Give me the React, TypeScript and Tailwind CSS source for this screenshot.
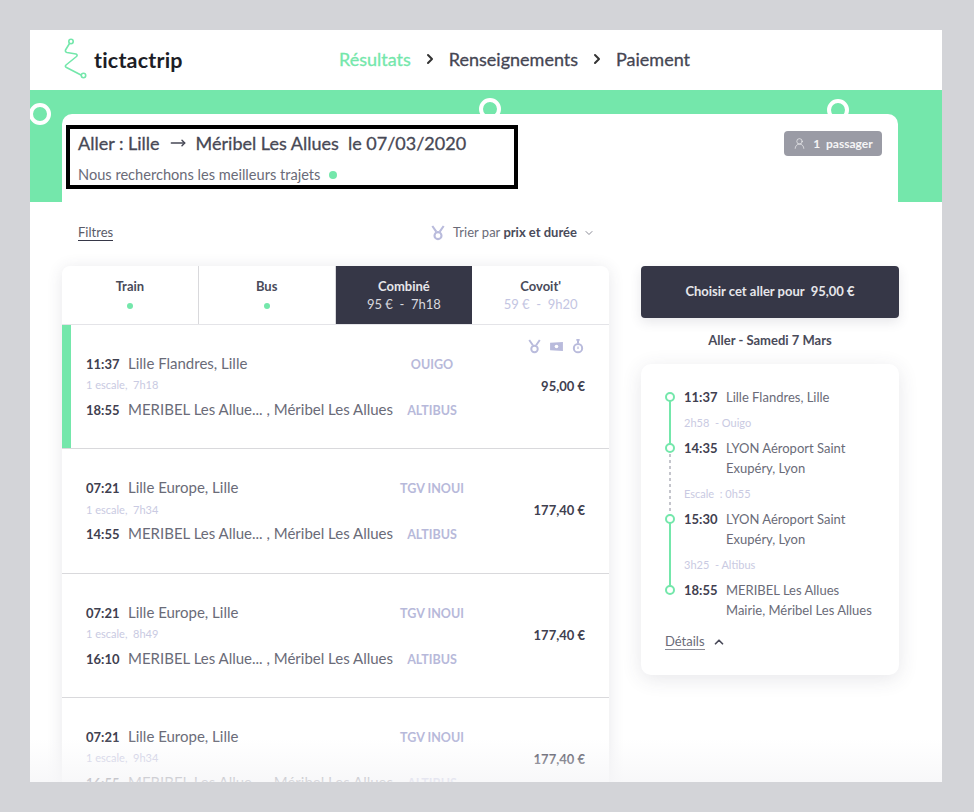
import { ChevronDown, ChevronRight, ChevronUp, MoveRight, UserRound } from 'lucide-react';

const trips = [
  { from: '11:37', fromName: 'Lille Flandres, Lille', op1: 'OUIGO', info: '1 escale,  7h18', to: '18:55', op2: 'ALTIBUS', price: '95,00 €', active: true },
  { from: '07:21', fromName: 'Lille Europe, Lille', op1: 'TGV INOUI', info: '1 escale,  7h34', to: '14:55', op2: 'ALTIBUS', price: '177,40 €', active: false },
  { from: '07:21', fromName: 'Lille Europe, Lille', op1: 'TGV INOUI', info: '1 escale,  8h49', to: '16:10', op2: 'ALTIBUS', price: '177,40 €', active: false },
  { from: '07:21', fromName: 'Lille Europe, Lille', op1: 'TGV INOUI', info: '1 escale,  9h34', to: '16:55', op2: 'ALTIBUS', price: '177,40 €', active: false },
];

function Ring({ className }: { className: string }) {
  return <div className={`absolute w-[22px] h-[22px] rounded-full border-[4px] border-white bg-[#74e7ab] ${className}`} />;
}

function Medal({ className }: { className?: string }) {
  return (
    <svg viewBox="0 0 16 18" className={className} fill="none" stroke="currentColor" strokeWidth="2.4">
      <path d="M1.5 1l4.5 6.5M14.5 1L10 7.5" />
      <circle cx="8" cy="12" r="4" />
    </svg>
  );
}

function Money() {
  return (
    <svg viewBox="0 0 16 12" className="w-[15px] h-[11px] text-[#b9bbdc]" fill="currentColor">
      <path d="M1 2l14-1v10L1 10z" />
      <circle cx="8" cy="6" r="2" fill="#fff" />
    </svg>
  );
}

function Stopwatch() {
  return (
    <svg viewBox="0 0 14 18" className="w-[12px] h-[15px] text-[#b9bbdc]" fill="none" stroke="currentColor" strokeWidth="2.4">
      <path d="M5 1h4M7 1v4" />
      <circle cx="7" cy="11" r="5" />
      <path d="M7 9v3" strokeWidth="1.5" />
    </svg>
  );
}

function TripRow({ trip }: { trip: (typeof trips)[number] }) {
  return (
    <div className="relative h-[124.4px] shrink-0 border-b border-[#d9d9dc] flex">
      {trip.active && <div className="w-[9px] bg-[#74e7ab]" />}
      <div className={`flex-1 flex pr-6 ${trip.active ? 'pl-[15px]' : 'pl-6'}`}>
        <div className="w-[392px] shrink-0 pt-[27px]">
          <div className="flex items-baseline h-5 text-[15px] text-[#6a6b78]">
            <span className="w-[42px] shrink-0 font-bold text-[13px] text-[#3f404f]">{trip.from}</span>
            <span className="w-[258px] shrink-0">{trip.fromName}</span>
            <span className="w-[92px] shrink-0 text-center text-[12.5px] font-bold text-[#b7b9da] whitespace-nowrap">{trip.op1}</span>
          </div>
          <div className="h-[11px] mt-[8px] flex items-center text-[11px] text-[#c9cae2] whitespace-pre">{trip.info}</div>
          <div className="flex items-baseline h-5 mt-[7px] text-[15px] text-[#6a6b78]">
            <span className="w-[42px] shrink-0 font-bold text-[13px] text-[#3f404f]">{trip.to}</span>
            <span className="w-[258px] shrink-0 whitespace-pre">MERIBEL Les Allue... , Méribel Les Allues</span>
            <span className="w-[92px] shrink-0 text-center text-[12.5px] font-bold text-[#b7b9da]">{trip.op2}</span>
          </div>
        </div>
        <div className="flex-1 flex flex-col items-end relative">
          {trip.active && (
            <div className="absolute top-[14px] right-[1px] flex items-center gap-[8px]">
              <Medal className="w-[13px] h-[15px] text-[#b9bbdc]" />
              <Money />
              <Stopwatch />
            </div>
          )}
          <div className="mt-[52px] text-[13px] font-bold text-[#3f404f] whitespace-nowrap">{trip.price}</div>
        </div>
      </div>
    </div>
  );
}

function Tab({ title, sub, dark, line }: { title: string; sub?: string; dark?: boolean; line?: boolean }) {
  return (
    <div className={`flex flex-col items-center pt-[12px] ${dark ? 'bg-[#363747]' : ''} ${line ? 'border-r border-[#d9d9dc]' : ''}`}>
      <div className={`text-[13px] font-bold leading-[16px] ${dark ? 'text-[#e6e6ea]' : 'text-[#4a4b5a]'}`}>{title}</div>
      {sub ? (
        <div className={`mt-[2px] text-[13px] leading-[16px] whitespace-pre ${dark ? 'text-[#d8d8de]' : 'text-[#c3c5e2]'}`}>{sub}</div>
      ) : (
        <div className="mt-[9px] w-[6px] h-[6px] rounded-full bg-[#74e7ab]" />
      )}
    </div>
  );
}

function Stop({ time, lines }: { time: string; lines: string[] }) {
  return (
    <div className="flex text-[13px] leading-[20px] text-[#6a6b78]">
      <span className="w-[42px] font-bold text-[#3f404f]">{time}</span>
      <div>
        {lines.map((l) => (
          <div key={l} className="whitespace-nowrap">{l}</div>
        ))}
      </div>
    </div>
  );
}

function Note({ children }: { children: string }) {
  return <div className="mt-2 mb-[7px] h-4 text-[11px] leading-[16px] text-[#c9cae2] whitespace-pre">{children}</div>;
}

export default function App() {
  return (
    <div className="w-[974px] h-[812px] bg-[#d3d4d8] pt-[30px] pl-[30px] overflow-hidden font-['Lato',sans-serif]">
      <div className="relative w-[912px] h-[752px] bg-white overflow-hidden">
        <header className="h-[60px] flex items-center">
          <div className="w-[309px] pl-[33px] flex items-center gap-[5px]">
            <svg viewBox="0 0 26 42" className="w-[26px] h-[42px] -mt-[2px]" fill="none" stroke="#74e7ab" strokeWidth="1.6" strokeLinejoin="round" strokeLinecap="round">
              <circle cx="8" cy="3.5" r="2.2" />
              <path d="M6.5 5.5L2.5 12q-.5 2 1.5 2.5l9 1.5q2 1 .5 2.5L3 27q-1.5 1.5 .5 2.5L18 37" />
              <circle cx="20.5" cy="37.5" r="2.2" />
            </svg>
            <span className="text-[21.5px] font-bold text-[#1c1d26] tracking-[0.2px]">tictactrip</span>
          </div>
          <nav className="flex items-center -mt-[2px] text-[18px] text-[#454653] [-webkit-text-stroke:0.3px_currentColor]">
            <span className="text-[#74e7ab]">Résultats</span>
            <ChevronRight className="w-4 h-4 mx-[11px] text-[#333]" strokeWidth={3} />
            <span>Renseignements</span>
            <ChevronRight className="w-4 h-4 mx-[11px] text-[#333]" strokeWidth={3} />
            <span>Paiement</span>
          </nav>
        </header>

        <section className="relative h-[112px] bg-[#74e7ab] pt-6 pl-8 pr-11">
          <Ring className="left-[-1px] top-[13px]" />
          <Ring className="left-[449px] top-[8px]" />
          <Ring className="left-[797px] top-[9px]" />
          <div className="relative h-[88px] bg-white rounded-t-[10px] flex items-start justify-between pr-4">
            <div className="ml-1 mt-[11px] w-[452px] h-[64px] border-[4px] border-black pl-2 pt-[2px] text-[#474855]">
              <div className="flex items-center h-[24px] text-[18px] whitespace-pre [-webkit-text-stroke:0.3px_currentColor]">
                Aller : Lille
                <MoveRight className="w-[22px] h-[16px] mx-[7px]" strokeWidth={2.2} />
                Méribel Les Allues  le 07/03/2020
              </div>
              <div className="mt-[11px] flex items-center text-[14.6px] leading-[18px] text-[#6a6b78]">
                Nous recherchons les meilleurs trajets
                <span className="ml-[9px] w-2 h-2 rounded-full bg-[#74e7ab]" />
              </div>
            </div>
            <div className="mt-[17px] w-[98px] h-[25px] rounded bg-[#9a9ba5] flex items-center justify-center gap-[7px] text-[12px] font-bold text-white/90">
              <UserRound className="w-[13px] h-[13px]" strokeWidth={1.2} />
              <span className="whitespace-pre">1  passager</span>
            </div>
          </div>
        </section>

        <div className="flex gap-8 pl-8">
          <div className="w-[547px]">
            <div className="h-16 flex items-center justify-between pl-4 pr-[14px] pb-[3px]">
              <span className="text-[13px] leading-[15px] text-[#5a5b68] border-b border-[#363747]">Filtres</span>
              <div className="flex items-center text-[13px] text-[#6a6b78]">
                <Medal className="w-[14px] h-[16px] text-[#b9bbdc] mr-[8px]" />
                <span>Trier par&nbsp;</span>
                <span className="font-bold text-[#4a4b5a]">prix et durée</span>
                <ChevronDown className="w-3 h-3 ml-[6px] text-[#8a8b96]" />
              </div>
            </div>
            <div className="bg-white rounded-t-lg shadow-[0_2px_16px_rgba(60,60,80,0.12)] overflow-hidden">
              <div className="grid grid-cols-4 h-[59px] border-b border-[#e4e4e8]">
                <Tab title="Train" line />
                <Tab title="Bus" line />
                <Tab title="Combiné" sub="95 €  -  7h18" dark />
                <Tab title="Covoit'" sub="59 €  -  9h20" />
              </div>
              <div className="flex flex-col">
                {trips.map((t) => (
                  <TripRow key={t.to} trip={t} />
                ))}
              </div>
            </div>
          </div>

          <div className="w-[258px] pt-16">
            <div className="h-[52px] rounded bg-[#363747] flex items-center justify-center text-[13px] font-bold text-[#e6e6ea] whitespace-pre shadow-[0_4px_12px_rgba(60,60,80,0.12)]">
              Choisir cet aller pour  95,00 €
            </div>
            <div className="h-[46px] flex items-center justify-center text-[13px] font-bold text-[#4a4b5a]">Aller - Samedi 7 Mars</div>
            <div className="h-[311px] rounded-[10px] bg-white shadow-[0_4px_20px_rgba(60,60,80,0.12)] pt-[23px] pl-[23px]">
              <div className="flex gap-2">
                <svg viewBox="0 0 12 214" className="w-3 h-[214px] shrink-0" fill="none" strokeWidth="2">
                  <path d="M6 10V61" stroke="#74e7ab" />
                  <path d="M6 61V132" stroke="#c4c5cc" strokeDasharray="3 3" />
                  <path d="M6 132V203" stroke="#74e7ab" />
                  {[10, 61, 132, 203].map((y) => (
                    <circle key={y} cx="6" cy={y} r="4" fill="#fff" stroke="#74e7ab" />
                  ))}
                </svg>
                <div>
                  <Stop time="11:37" lines={['Lille Flandres, Lille']} />
                  <Note>2h58  - Ouigo</Note>
                  <Stop time="14:35" lines={['LYON Aéroport Saint', 'Exupéry, Lyon']} />
                  <Note>Escale  : 0h55</Note>
                  <Stop time="15:30" lines={['LYON Aéroport Saint', 'Exupéry, Lyon']} />
                  <Note>3h25  - Altibus</Note>
                  <Stop time="18:55" lines={['MERIBEL Les Allues', 'Mairie, Méribel Les Allues']} />
                </div>
              </div>
              <div className="mt-[14px] ml-[1px] flex items-center text-[13px] text-[#6a6b78]">
                <span className="leading-[15px] border-b border-[#8a8b96]">Détails</span>
                <ChevronUp className="w-[14px] h-[14px] ml-[7px] text-[#4a4b5a]" strokeWidth={3} />
              </div>
            </div>
          </div>
        </div>

        <div className="absolute left-0 right-0 bottom-0 h-[44px] bg-gradient-to-b from-transparent to-[#f6f6f8]/80" />
      </div>
    </div>
  );
}
